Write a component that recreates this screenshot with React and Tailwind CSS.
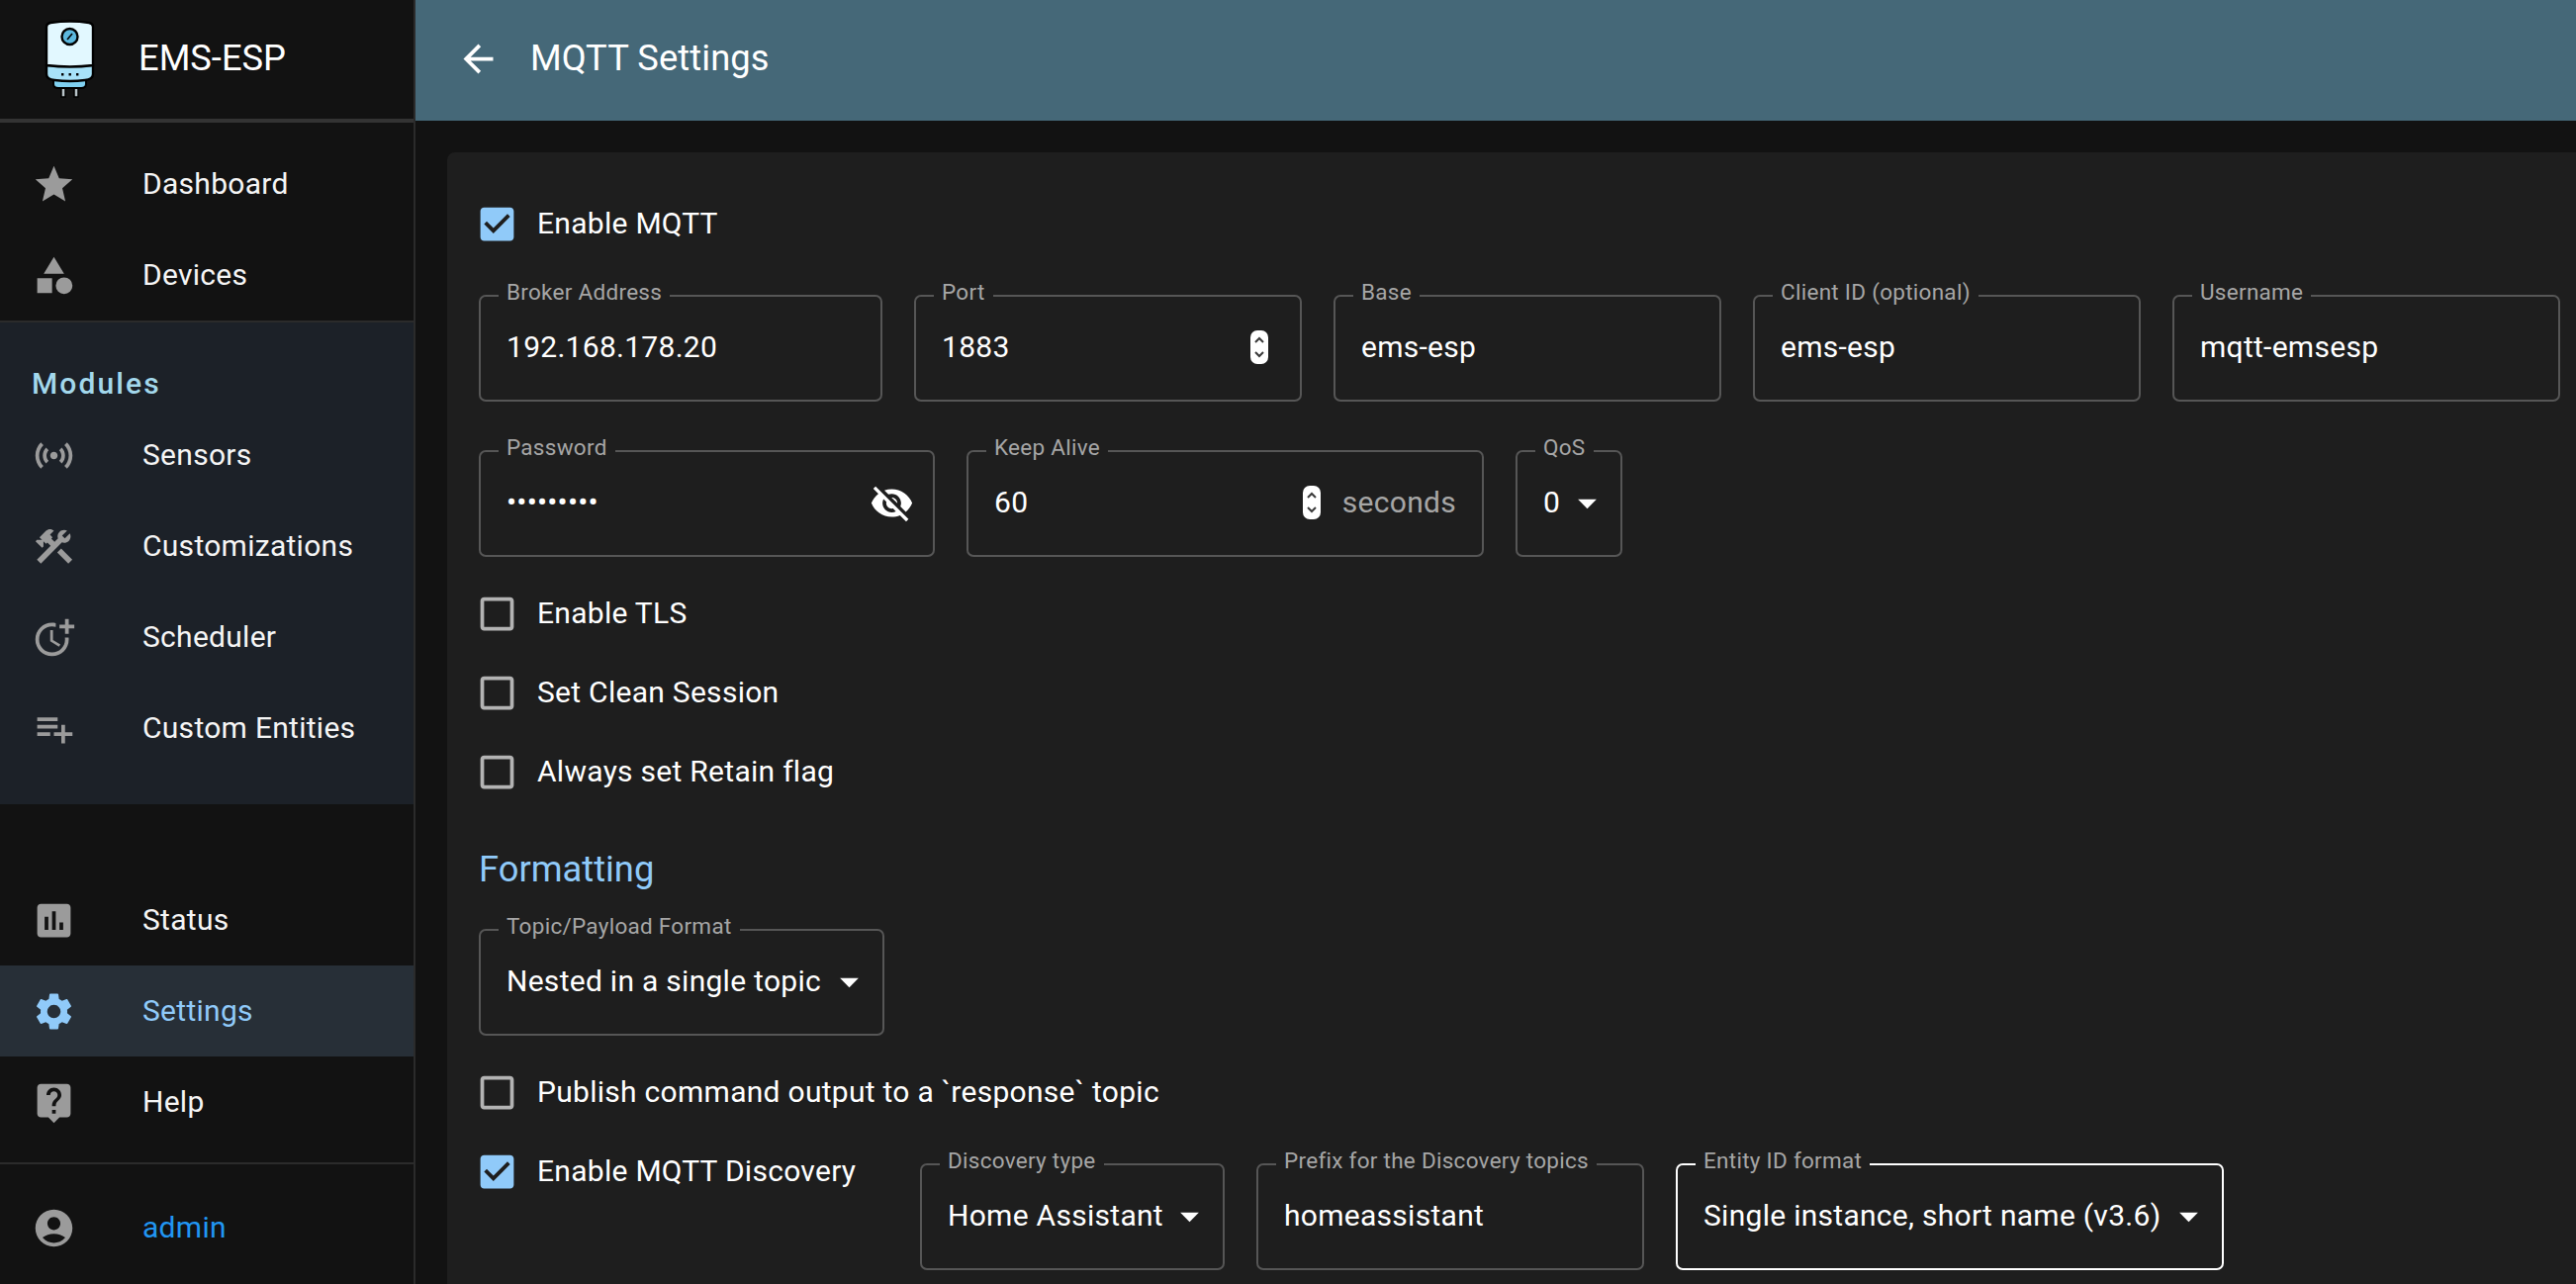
const P = ({ d, className = "" }) => (
  <svg viewBox="0 0 24 24" className={className} fill="currentColor"><path d={d} /></svg>
);

const ICONS = {
  star: "M12 17.27 18.18 21l-1.64-7.03L22 9.24l-7.19-.61L12 2 9.19 8.63 2 9.24l5.46 4.73L5.82 21z",
  category: "m12 2-5.5 9h11zM17.5 13a4.5 4.5 0 1 0 0 9 4.5 4.5 0 0 0 0-9M3 13.5h8v8H3z",
  sensors: "M7.76 16.24C6.67 15.16 6 13.66 6 12s.67-3.16 1.76-4.24l1.42 1.42C8.45 9.9 8 10.9 8 12c0 1.1.45 2.1 1.17 2.83zm8.48 0C17.33 15.16 18 13.66 18 12s-.67-3.16-1.76-4.24l-1.42 1.42C15.55 9.9 16 10.9 16 12c0 1.1-.45 2.1-1.17 2.83zM12 10c-1.1 0-2 .9-2 2s.9 2 2 2 2-.9 2-2-.9-2-2-2m8 2c0 2.21-.9 4.21-2.35 5.65l1.42 1.42C20.88 17.26 22 14.76 22 12s-1.12-5.26-2.93-7.07l-1.42 1.42C19.1 7.79 20 9.79 20 12M6.35 6.35 4.93 4.93C3.12 6.74 2 9.24 2 12s1.12 5.26 2.93 7.07l1.42-1.42C4.9 16.21 4 14.21 4 12s.9-4.21 2.35-5.65",
  construction: "m13.7826 15.1719 2.1213-2.1213 5.9963 5.9962-2.1213 2.1213zM17.5 10c1.93 0 3.5-1.57 3.5-3.5 0-.58-.16-1.12-.41-1.6l-2.7 2.7-1.49-1.49 2.7-2.7c-.48-.25-1.02-.41-1.6-.41C15.57 3 14 4.57 14 6.5c0 .41.08.8.21 1.16l-1.85 1.85-1.78-1.78.71-.71-1.41-1.41L12 3.49c-1.17-1.17-3.07-1.17-4.24 0L4.22 7.03l1.41 1.41H2.81l-.71.71 3.54 3.54.71-.71V9.15l1.41 1.41.71-.71 1.78 1.78-7.41 7.41 2.12 2.12L16.34 9.79c.36.13.75.21 1.16.21",
  moreTime: "M10 8v6l4.7 2.9.8-1.2-4-2.4V8zM17.92 12c.05.33.08.66.08 1 0 3.9-3.1 7-7 7s-7-3.1-7-7 3.1-7 7-7c.7 0 1.37.1 2 .29V4.23c-.64-.15-1.31-.23-2-.23-5 0-9 4-9 9s4 9 9 9 9-4 9-9c0-.34-.02-.67-.06-1zM20 5V2h-2v3h-3v2h3v3h2V7h3V5z",
  playlist: "M14 10H3v2h11zm0-4H3v2h11zm4 8v-4h-2v4h-4v2h4v4h2v-4h4v-2zM3 16h7v-2H3z",
  assessment: "M19 3H5c-1.1 0-2 .9-2 2v14c0 1.1.9 2 2 2h14c1.1 0 2-.9 2-2V5c0-1.1-.9-2-2-2M9 17H7v-7h2zm4 0h-2V7h2zm4 0h-2v-4h2z",
  settings: "M19.14 12.94c.04-.3.06-.61.06-.94 0-.32-.02-.64-.07-.94l2.03-1.58c.18-.14.23-.41.12-.61l-1.92-3.32c-.12-.22-.37-.29-.59-.22l-2.39.96c-.5-.38-1.03-.7-1.62-.94l-.36-2.54c-.04-.24-.24-.41-.48-.41h-3.84c-.24 0-.43.17-.47.41l-.36 2.54c-.59.24-1.13.57-1.62.94l-2.39-.96c-.22-.08-.47 0-.59.22L2.74 8.87c-.12.21-.08.47.12.61l2.03 1.58c-.05.3-.09.63-.09.94s.02.64.07.94l-2.03 1.58c-.18.14-.23.41-.12.61l1.92 3.32c.12.22.37.29.59.22l2.39-.96c.5.38 1.03.7 1.62.94l.36 2.54c.05.24.24.41.48.41h3.84c.24 0 .44-.17.47-.41l.36-2.54c.59-.24 1.13-.56 1.62-.94l2.39.96c.22.08.47 0 .59-.22l1.92-3.32c.12-.22.07-.47-.12-.61zM12 15.6c-1.98 0-3.6-1.62-3.6-3.6s1.62-3.6 3.6-3.6 3.6 1.62 3.6 3.6-1.62 3.6-3.6 3.6",
  help: "M19 2H5c-1.11 0-2 .9-2 2v14c0 1.1.89 2 2 2h4l3 3 3-3h4c1.1 0 2-.9 2-2V4c0-1.1-.9-2-2-2m-6 16h-2v-2h2zm2.07-7.75-.9.92C13.45 11.9 13 12.5 13 14h-2v-.5c0-1.1.45-2.1 1.17-2.83l1.24-1.26c.37-.36.59-.86.59-1.41 0-1.1-.9-2-2-2s-2 .9-2 2H8c0-2.21 1.79-4 4-4s4 1.79 4 4c0 .88-.36 1.68-.93 2.25",
  account: "M12 2C6.48 2 2 6.48 2 12s4.48 10 10 10 10-4.48 10-10S17.52 2 12 2m0 4c1.93 0 3.5 1.57 3.5 3.5S13.93 13 12 13s-3.5-1.57-3.5-3.5S10.07 6 12 6m0 14c-2.03 0-4.43-.82-6.14-2.88C7.55 15.8 9.68 15 12 15s4.45.8 6.14 2.12C16.43 19.18 14.03 20 12 20",
  back: "M20 11H7.83l5.59-5.59L12 4l-8 8 8 8 1.41-1.41L7.83 13H20z",
  eyeOff: "M12 7c2.76 0 5 2.24 5 5 0 .65-.13 1.26-.36 1.83l2.92 2.92c1.51-1.26 2.7-2.89 3.43-4.75-1.73-4.39-6-7.5-11-7.5-1.4 0-2.74.25-3.98.7l2.16 2.16C10.74 7.13 11.35 7 12 7M2 4.27l2.28 2.28.46.46C3.08 8.3 1.78 10.02 1 12c1.73 4.39 6 7.5 11 7.5 1.55 0 3.03-.3 4.38-.84l.42.42L19.73 22 21 20.73 3.27 3zM7.53 9.8l1.55 1.55c-.05.21-.08.43-.08.65 0 1.66 1.34 3 3 3 .22 0 .44-.03.65-.08l1.55 1.55c-.67.33-1.41.53-2.2.53-2.76 0-5-2.24-5-5 0-.79.2-1.53.53-2.2m4.31-.78 3.15 3.15.02-.16c0-1.66-1.34-3-3-3z",
  checked: "M19 3H5c-1.11 0-2 .9-2 2v14c0 1.1.89 2 2 2h14c1.11 0 2-.9 2-2V5c0-1.1-.89-2-2-2m-9 14-5-5 1.41-1.41L10 14.17l7.59-7.59L19 8z",
  unchecked: "M19 5v14H5V5zm0-2H5c-1.1 0-2 .9-2 2v14c0 1.1.9 2 2 2h14c1.1 0 2-.9 2-2V5c0-1.1-.9-2-2-2",
  drop: "M7 10l5 5 5-5z",
};

const Logo = () => (
  <svg viewBox="0 0 52 80" className="w-[52px] h-[80px]">
    <path d="M17 68h4v10h-4zM30 68h4v10h-4z" fill="#b9c4c9" stroke="#000" strokeWidth="1.5" />
    <path d="M9 60h33v5q0 4-5 4H14q-5 0-5-4z" fill="#7fd0f0" stroke="#000" strokeWidth="2" />
    <path d="M2 46h47v9q0 5-8 6-15 2-31 0-8-1-8-6z" fill="#a8e2f8" stroke="#000" strokeWidth="2.4" />
    <path d="M2 46V7q0-3 4-4 20-3 39 0 4 1 4 4v39q-23 3-47 0z" fill="#e2f8ff" stroke="#000" strokeWidth="2.4" />
    <circle cx="25.5" cy="17" r="8" fill="#5cb8de" stroke="#000" strokeWidth="2.4" />
    <path d="M23 20l5-6" stroke="#000" strokeWidth="1.6" />
    <path d="M17 54h2.4v2.4H17zM24.5 54h2.4v2.4h-2.4zM32 54h2.4v2.4H32z" fill="#000" />
  </svg>
);

const NavItem = ({ icon, label, active, className = "" }) => (
  <div className={`h-[92px] flex items-center pl-[32px] ${active ? "bg-[#272f37] text-[#90caf9]" : "text-[#f5f5f5]"} ${className}`}>
    <P d={ICONS[icon]} className={`w-[45px] h-[45px] shrink-0 ${active ? "text-[#90caf9]" : "text-[#9b9b9b]"}`} />
    <span className="ml-[67px] text-[30px] leading-none tracking-[0.28px]">{label}</span>
  </div>
);

const Field = ({ label, children, className = "", focus }) => (
  <fieldset className={`h-[122px] min-w-0 rounded-[7px] border-2 pl-[18px] pr-[14px] shrink-0 ${focus ? "border-white" : "border-[#565656]"} ${className}`}>
    <legend className="text-[22.5px] leading-[22px] pb-[8px] text-[#a6a6a6] px-[8px] tracking-[0.28px]">{label}</legend>
    <div className="h-[74px] flex items-center pl-[8px] text-[30px] leading-none text-white tracking-[0.28px] whitespace-nowrap">{children}</div>
  </fieldset>
);

const Spinner = ({ className = "" }) => (
  <div className={`ml-auto w-[18px] h-[34px] rounded-[7px] bg-white shrink-0 ${className}`}>
    <svg viewBox="0 0 18 34" className="w-[18px] h-[34px]" fill="none" stroke="#3a3a3a" strokeWidth="2">
      <path d="M5 12l4-4 4 4M5 22l4 4 4-4" />
    </svg>
  </div>
);

const Arrow = ({ className = "" }) => <P d={ICONS.drop} className={`w-[45px] h-[45px] text-white shrink-0 ${className}`} />;

const Check = ({ label, checked, className = "" }) => (
  <div className={`h-[80px] flex items-center ${className}`}>
    <P d={checked ? ICONS.checked : ICONS.unchecked} className={`w-[45px] h-[45px] -ml-[4px] shrink-0 ${checked ? "text-[#90caf9]" : "text-[#b3b3b3]"}`} />
    <span className="ml-[18px] text-[30px] leading-none text-white tracking-[0.28px] whitespace-nowrap">{label}</span>
  </div>
);

export default function App() {
  return (
    <div className="w-[2604px] h-[1298px] overflow-hidden flex bg-[#121212] font-['Roboto',sans-serif]">
      <aside className="w-[420px] h-full shrink-0 bg-[#121212] border-r-2 border-[#2b2b2b] flex flex-col">
        <div className="h-[124px] border-b-4 border-[#333] flex items-center pl-[45px] shrink-0">
          <Logo />
          <span className="ml-[43px] pb-[2px] text-[36.3px] leading-none text-white">EMS-ESP</span>
        </div>
        <div className="h-[202px] border-b-2 border-[#2b2b2b] pt-[16px] shrink-0">
          <NavItem icon="star" label="Dashboard" />
          <NavItem icon="category" label="Devices" />
        </div>
        <div className="h-[487px] bg-[#1c2128] shrink-0">
          <div className="h-[88px] pl-[32px] pt-[47px] text-[30px] leading-none font-medium text-[#a3d8ec] tracking-[2.1px]">Modules</div>
          <NavItem icon="sensors" label="Sensors" />
          <NavItem icon="construction" label="Customizations" />
          <NavItem icon="moreTime" label="Scheduler" />
          <NavItem icon="playlist" label="Custom Entities" />
        </div>
        <div className="h-[364px] border-b-2 border-[#2b2b2b] pt-[71px] shrink-0">
          <NavItem icon="assessment" label="Status" />
          <NavItem icon="settings" label="Settings" active />
          <NavItem icon="help" label="Help" />
        </div>
        <div className="h-[120px] flex items-center pl-[32px] pt-[8px]">
          <P d={ICONS.account} className="w-[45px] h-[45px] text-[#9b9b9b] shrink-0" />
          <span className="ml-[67px] text-[30px] leading-none text-[#2196f3] tracking-[0.28px]">admin</span>
        </div>
      </aside>

      <main className="flex-1 min-w-0 flex flex-col">
        <header className="h-[122px] shrink-0 bg-[#456878] flex items-center pl-[41px] pb-[3px]">
          <P d={ICONS.back} className="w-[45px] h-[45px] text-white" />
          <h1 className="ml-[30px] text-[36.3px] leading-none text-white tracking-[0.1px]">MQTT Settings</h1>
        </header>
        <div className="flex-1 pt-[32px] pl-[32px]">
          <section className="h-[1300px] bg-[#1e1e1e] rounded-l-[8px] pl-[32px] pt-[32px]">
            <Check label="Enable MQTT" checked />
            <div className="flex gap-[32px] mt-[18px]">
              <Field label="Broker Address" className="w-[408px]">192.168.178.20</Field>
              <Field label="Port" className="w-[392px]">1883<Spinner className="mr-[18px]" /></Field>
              <Field label="Base" className="w-[392px]">ems-esp</Field>
              <Field label="Client ID (optional)" className="w-[392px]">ems-esp</Field>
              <Field label="Username" className="w-[392px]">mqtt-emsesp</Field>
            </div>
            <div className="flex gap-[32px] mt-[35px]">
              <Field label="Password" className="w-[461px]">
                <span className="tracking-[0.2px] -mt-[1px]">•••••••••</span>
                <P d={ICONS.eyeOff} className="ml-auto w-[45px] h-[45px] text-white shrink-0 mr-[5px]" />
              </Field>
              <Field label="Keep Alive" className="w-[523px]">
                60<Spinner />
                <span className="ml-[22px] mr-[12px] text-[#a6a6a6]">seconds</span>
              </Field>
              <Field label="QoS" className="w-[108px]">0<Arrow className="ml-[5px]" /></Field>
            </div>
            <Check label="Enable TLS" className="mt-[17px]" />
            <Check label="Set Clean Session" />
            <Check label="Always set Retain flag" />
            <h2 className="mt-[39px] text-[36.3px] leading-[40px] text-[#90caf9]">Formatting</h2>
            <Field label="Topic/Payload Format" className="w-[410px] mt-[26px]">
              Nested in a single topic<Arrow className="ml-[6px]" />
            </Field>
            <Check label="Publish command output to a `response` topic" className="mt-[17px]" />
            <div className="flex items-start">
              <Check label="Enable MQTT Discovery" checked className="w-[446px] shrink-0" />
              <div className="flex gap-[32px] mt-[18px]">
                <Field label="Discovery type" className="w-[308px]">Home Assistant<Arrow className="ml-[4px]" /></Field>
                <Field label="Prefix for the Discovery topics" className="w-[392px]">homeassistant</Field>
                <Field label="Entity ID format" focus className="w-[554px]">Single instance, short name (v3.6)<Arrow className="ml-[6px]" /></Field>
              </div>
            </div>
          </section>
        </div>
      </main>
    </div>
  );
}
